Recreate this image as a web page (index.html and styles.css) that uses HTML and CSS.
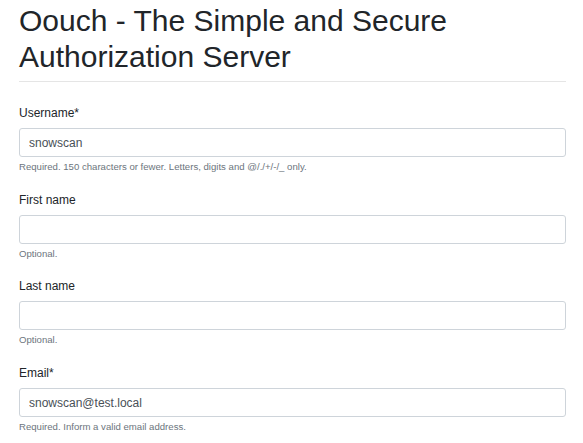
FILE: index.html
```html
<!DOCTYPE html>
<html lang="en">
<head>
<meta charset="utf-8">
<title>Oouch</title>
<link rel="stylesheet" href="styles.css">
</head>
<body>
<div class="container">
  <div class="page-header">
    <h1 class="title">Oouch - The Simple and Secure Authorization Server</h1>
  </div>
  <form class="form">
    <div class="form-group">
      <label class="label" for="username">Username*</label>
      <input class="input" id="username" type="text" value="snowscan">
      <small class="help">Required. 150 characters or fewer. Letters, digits and @/./+/-/_ only.</small>
    </div>
    <div class="form-group">
      <label class="label" for="first">First name</label>
      <input class="input" id="first" type="text" value="">
      <small class="help">Optional.</small>
    </div>
    <div class="form-group">
      <label class="label" for="last">Last name</label>
      <input class="input" id="last" type="text" value="">
      <small class="help">Optional.</small>
    </div>
    <div class="form-group">
      <label class="label" for="email">Email*</label>
      <input class="input" id="email" type="email" value="snowscan@test.local">
      <small class="help">Required. Inform a valid email address.</small>
    </div>
  </form>
</div>
</body>
</html>
```

FILE: styles.css
```css
html, body {
  margin: 0;
  padding: 0;
  background: #fff;
}
body {
  font-family: "Liberation Sans", Arial, sans-serif;
  font-size: 12px;
  line-height: 1.5;
  color: #212529;
}
.container {
  padding: 3px 17px 0 19px;
}
.page-header {
  border-bottom: 1px solid rgba(0, 0, 0, 0.1);
}
.title {
  margin: 0 0 6px 0;
  font-size: 30px;
  font-weight: 400;
  line-height: 1.2;
  color: #212529;
}
.form {
  padding-top: 22px;
}
.form-group {
  display: flex;
  flex-direction: column;
  margin-bottom: 16.27px;
}
.label {
  display: block;
  margin-bottom: 6px;
  line-height: 18px;
}
.input {
  box-sizing: border-box;
  display: block;
  width: 100%;
  height: 29px;
  margin: 0;
  padding: 4.5px 9px;
  font-family: inherit;
  font-size: 12px;
  line-height: 18px;
  color: #495057;
  background: #fff;
  border: 1px solid #ced4da;
  border-radius: 3px;
  outline: none;
}
.help {
  display: block;
  margin-top: 3px;
  font-size: 9.6px;
  line-height: 14.4px;
  color: #6c757d;
}
```
